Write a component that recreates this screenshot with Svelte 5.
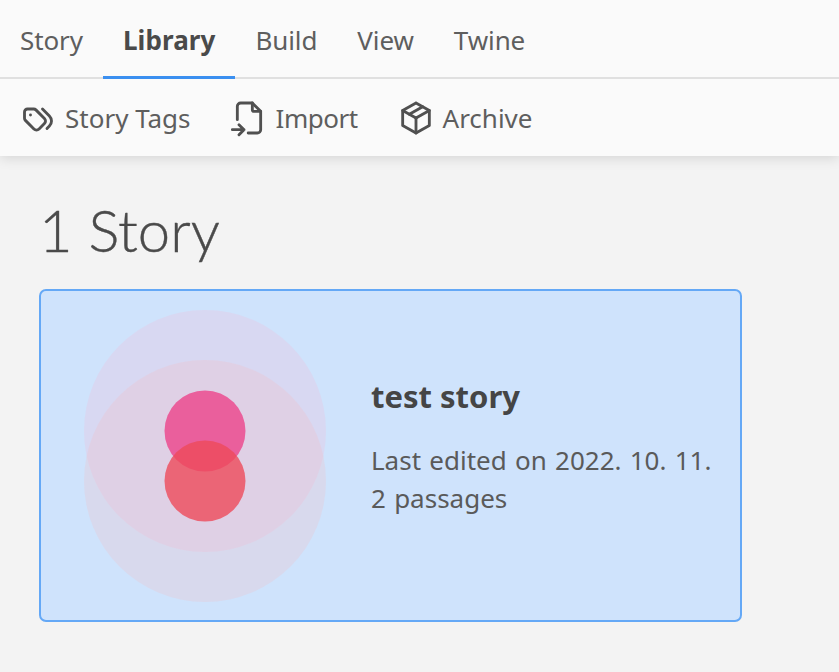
<script>
  const tabs = ['Story', 'Library', 'Build', 'View', 'Twine'];
</script>

<div class="page">
  <header class="top">
    <nav class="tabs">
      {#each tabs as t}
        <div class="tab" class:active={t === 'Library'}>{t}</div>
      {/each}
    </nav>
    <div class="tools">
      <div class="tool">
        <svg class="tag" width="36" height="36" viewBox="0 0 24 24" fill="none" stroke="#505050" stroke-width="1.900" stroke-linecap="round" stroke-linejoin="round">
          <path d="M3 8v4.172a2 2 0 0 0 .586 1.414l5.710 5.710a2.410 2.410 0 0 0 3.408 0l3.592 -3.592a2.410 2.410 0 0 0 0 -3.408l-5.710 -5.710a2 2 0 0 0 -1.414 -.586h-4.172a2 2 0 0 0 -2 2z"/>
          <path d="M18 19l1.592 -1.592a4.820 4.820 0 0 0 0 -6.816l-4.592 -4.592"/>
          <path d="M7 10h-.01"/>
        </svg>
        <span>Story Tags</span>
      </div>
      <div class="tool">
        <svg width="40" height="40" viewBox="0 0 24 24" fill="none" stroke="#505050" stroke-width="1.700" stroke-linecap="round" stroke-linejoin="round">
          <path d="M14 3v4a1 1 0 0 0 1 1h4"/>
          <path d="M5 13v-8a2 2 0 0 1 2 -2h7l5 5v11a2 2 0 0 1 -2 2h-5.500m-9.500 -2h7m-3 -3l3 3l-3 3"/>
        </svg>
        <span class="narrow">Import</span>
      </div>
      <div class="tool">
        <svg width="40" height="40" viewBox="0 0 24 24" fill="none" stroke="#505050" stroke-width="1.700" stroke-linecap="round" stroke-linejoin="round">
          <path d="M12 3l8 4.500l0 9l-8 4.500l-8 -4.500l0 -9l8 -4.500"/>
          <path d="M12 12l8 -4.500"/>
          <path d="M12 12l0 9"/>
          <path d="M12 12l-8 -4.500"/>
          <path d="M16 5.250l-8 4.500"/>
        </svg>
        <span>Archive</span>
      </div>
    </div>
  </header>

  <main class="content">
    <h1>1 Story</h1>
    <article class="card">
      <div class="art">
        <svg width="242" height="292" viewBox="0 0 242 292">
          <circle cx="121" cy="121" r="121" fill="#ffb0cf" opacity=".2"/>
          <circle cx="121" cy="171" r="121" fill="#ffb6b6" opacity=".2"/>
          <circle cx="121" cy="121" r="40.500" fill="#ea5f9c"/>
          <circle cx="121" cy="171" r="40.500" fill="#ee4a5a" opacity=".8"/>
        </svg>
      </div>
      <div class="info">
        <h2>test story</h2>
        <p>Last edited on 2022. 10. 11.<br />2 passages</p>
      </div>
    </article>
  </main>
</div>

<style>
  :global(body) {
    margin: 0;
    background: #f3f3f3;
  }
  .page {
    height: 672px;
    overflow: hidden;
    font-family: "Noto Sans", "Open Sans", sans-serif;
    color: #4a4a4a;
  }
  .top {
    background: #fafafa;
    box-shadow: 0 2px 12px rgba(0, 0, 0, 0.13);
    height: 156px;
  }
  .tabs {
    display: flex;
    height: 77px;
    border-bottom: 2px solid #e0e0e0;
  }
  .tab {
    padding: 0 20px;
    line-height: 80px;
    font-size: 26px;
    letter-spacing: -0.1px;
    color: #5e5e5e;
    margin-bottom: -2px;
    border-bottom: 3px solid transparent;
    height: 76px;
  }
  .tab.active {
    font-weight: 700;
    letter-spacing: 0.1px;
    color: #4a4a4a;
    border-bottom-color: #3b8ff0;
  }
  .tools {
    display: flex;
    align-items: center;
    height: 77px;
    padding-left: 18px;
    gap: 38px;
  }
  .tool {
    display: flex;
    align-items: center;
    gap: 7px;
    font-size: 26px;
    color: #5e5e5e;
  }
  .tool svg {
    flex: none;
  }
  .tool svg.tag {
    margin: 0 2px;
  }
  .narrow {
    letter-spacing: -0.5px;
  }
  .content {
    padding: 40px 0 0 39px;
  }
  h1 {
    margin: 0 0 26px 0;
    font-family: "Lato", sans-serif;
    font-weight: 300;
    font-size: 58px;
    line-height: 67px;
    color: #4a4a4a;
    -webkit-text-stroke: 0.4px #4a4a4a;
  }
  .card {
    display: flex;
    align-items: center;
    box-sizing: border-box;
    width: 703px;
    height: 333px;
    background: #cfe3fc;
    border: 2px solid #64a8f6;
    border-radius: 7px;
    padding-left: 43px;
  }
  .art {
    width: 242px;
    height: 292px;
    flex: none;
  }
  .info {
    margin-left: 45px;
    margin-top: -19px;
  }
  h2 {
    margin: 0 0 25px;
    font-size: 31px;
    line-height: 40px;
    font-weight: 700;
    color: #454545;
  }
  p {
    margin: 0;
    font-size: 26px;
    line-height: 38px;
    word-spacing: 1.5px;
    color: #5a5a5a;
  }
</style>
